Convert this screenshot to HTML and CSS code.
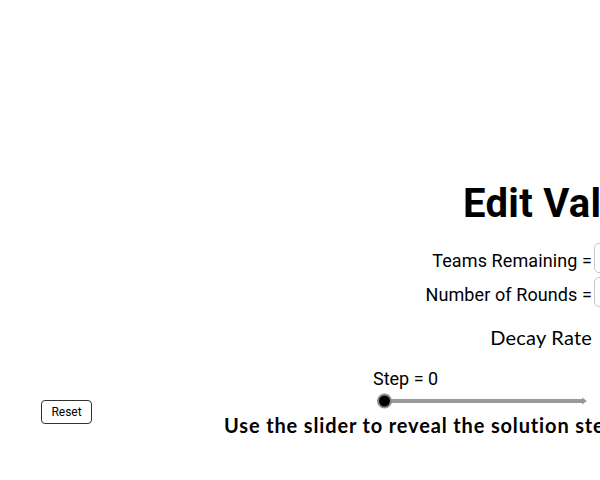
FILE: index.html
```html
<!DOCTYPE html>
<html>
<head>
<meta charset="utf-8">
<link rel="stylesheet" href="styles.css">
</head>
<body>
<div class="stage">
  <div class="title">Edit Values</div>
  <div class="form">
    <div class="row"><span class="label">Teams Remaining =</span><span class="box"></span></div>
    <div class="row"><span class="label">Number of Rounds =</span><span class="box"></span></div>
  </div>
  <div class="decay"><span class="tex">Decay Rate</span></div>
  <div class="controls">
    <div class="step">Step = 0</div>
    <div class="slider">
      <svg width="213" height="16" viewBox="0 0 213 16">
        <line x1="8.5" y1="8" x2="207" y2="8" stroke="#999999" stroke-width="4"/>
        <polygon points="206,4.5 211,8 206,11.5" fill="#999999"/>
        <circle cx="8.5" cy="8" r="6.5" fill="#000000" stroke="#8c8c8c" stroke-width="2"/>
      </svg>
    </div>
    <button class="reset">Reset</button>
    <div class="hint">Use the slider to reveal the solution steps.</div>
  </div>
</div>
</body>
</html>
```
FILE: styles.css
```css
html, body {
  margin: 0;
  padding: 0;
  background: #ffffff;
}
.stage {
  width: 600px;
  height: 480px;
  overflow: hidden;
  display: flex;
  flex-direction: column;
  font-family: Roboto, "Liberation Sans", sans-serif;
  color: #000000;
}
.title {
  padding-top: 184px;
  margin-left: 463px;
  font: 700 40px/40px Roboto, sans-serif;
  letter-spacing: 0.3px;
  white-space: nowrap;
}
.form {
  margin-top: 19px;
  width: 660px;
  flex: none;
  display: flex;
  flex-direction: column;
  gap: 4px;
}
.row {
  display: flex;
  justify-content: flex-end;
  height: 30px;
}
.label {
  font: 400 18px/22px Roboto, sans-serif;
  padding-top: 7px;
  letter-spacing: 0.1px;
  white-space: nowrap;
}
.box {
  width: 66px;
  height: 30px;
  margin-left: 2px;
  box-sizing: border-box;
  border: 1px solid #c8c8c8;
  border-radius: 5px;
  background: #ffffff;
}
.decay {
  margin-top: 18px;
  width: 660px;
  flex: none;
  display: flex;
  justify-content: flex-end;
  padding-right: 68px;
  box-sizing: border-box;
}
.tex {
  font: 400 20px/24px Lato, sans-serif;
  letter-spacing: 0.2px;
  white-space: nowrap;
}
.controls {
  margin-top: 19px;
  display: grid;
  grid-template-columns: 41px 50px 133px 149px 300px;
  grid-template-rows: 21px 16px 24px;
  row-gap: 4px;
}
.step {
  grid-column: 5;
  grid-row: 1;
  font: 400 18px/21px Roboto, sans-serif;
  white-space: nowrap;
}
.slider {
  grid-column: 5;
  grid-row: 2;
  margin-left: 3px;
  height: 16px;
}
.slider svg {
  display: block;
}
.reset {
  grid-column: 2;
  grid-row: 2 / 4;
  align-self: start;
  margin-top: 7px;
  width: 51px;
  height: 24px;
  padding: 0;
  border: 1px solid #333333;
  border-radius: 4px;
  background: #ffffff;
  font: 400 12px Roboto, sans-serif;
  color: #000000;
}
.hint {
  grid-column: 4 / 6;
  grid-row: 3;
  margin-top: 0;
  font: 700 20px/24px Lato, sans-serif;
  letter-spacing: 0.85px;
  white-space: nowrap;
}
```
